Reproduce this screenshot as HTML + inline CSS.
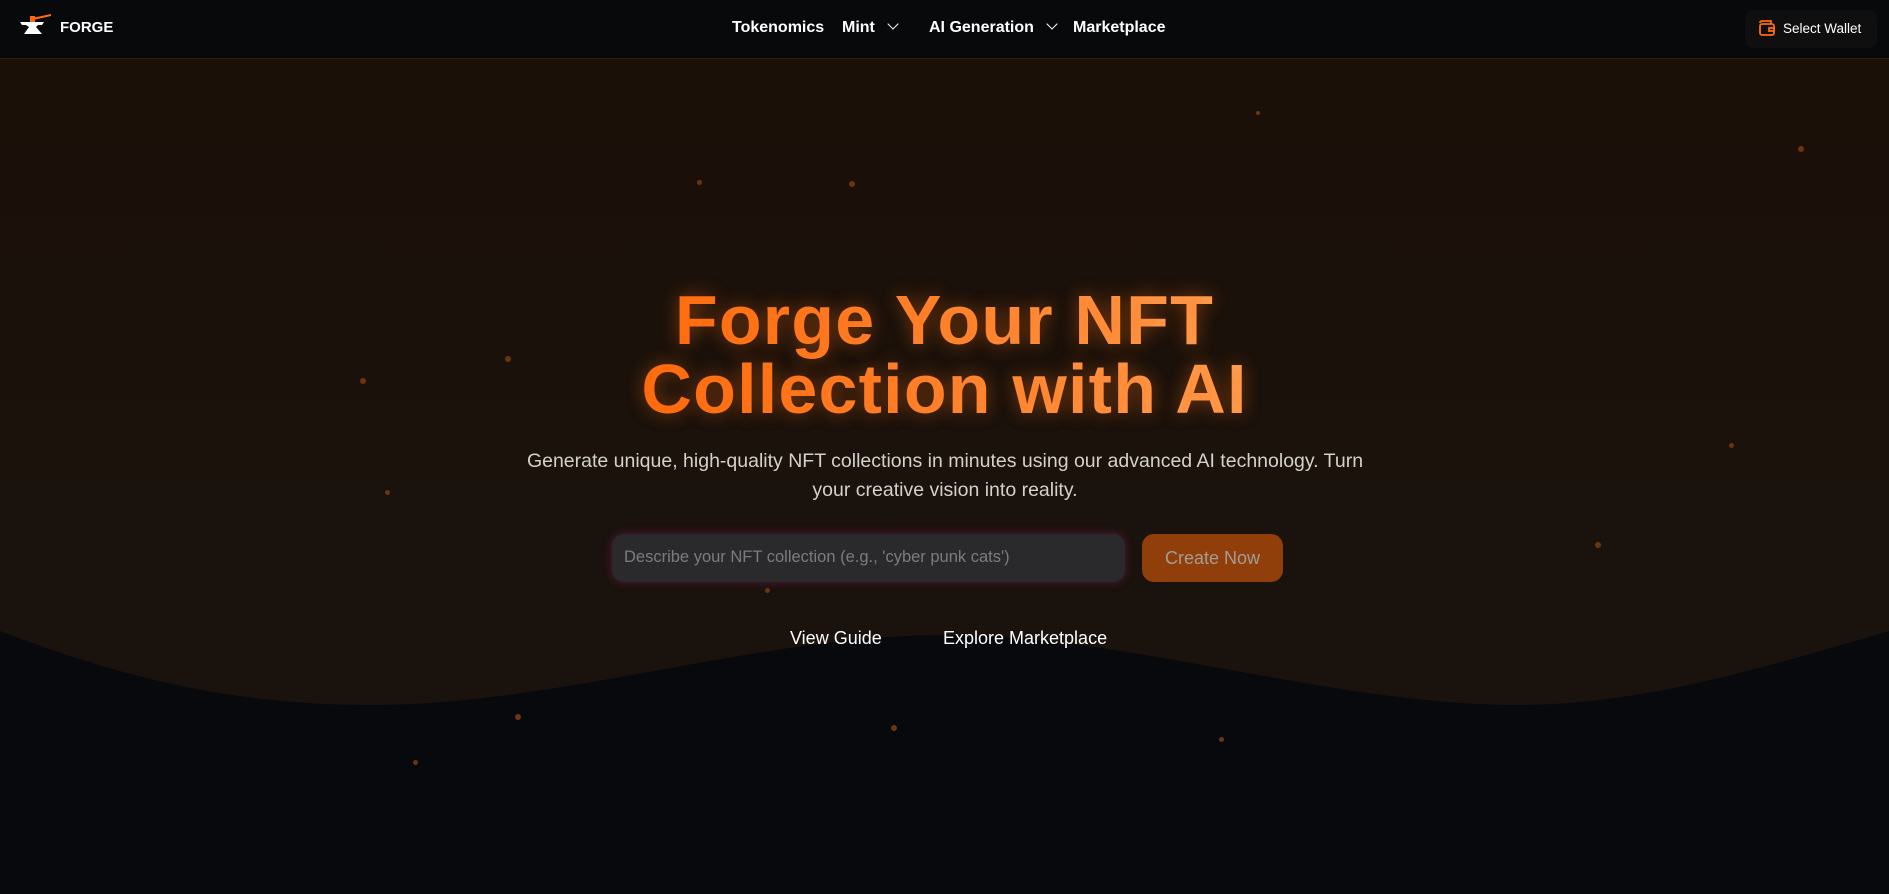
<!DOCTYPE html>
<html><head><meta charset="utf-8"><style>
*{margin:0;padding:0;box-sizing:border-box}
body{width:1889px;height:894px;overflow:hidden;background:#08090c;font-family:"Liberation Sans",sans-serif;position:relative}
.hero{position:absolute;left:0;top:59px;width:1889px;height:835px;background:linear-gradient(180deg,#1b1008 0%,#1a120c 60%,#1a120d 100%)}
svg.wave{position:absolute;left:0;top:0}
nav{position:absolute;left:0;top:0;width:1889px;height:59px;background:#08090b;border-bottom:1px solid #2a2018}
.logo{position:absolute;left:60px;top:19px;color:#fff;font-weight:bold;font-size:15px}
.nav a{position:absolute;top:19px;color:#fff;font-weight:bold;font-size:16px;text-decoration:none;white-space:nowrap}
.chev{display:inline-block;width:8px;height:8px;border-right:1.6px solid #fff;border-bottom:1.6px solid #fff;transform:rotate(45deg);margin-left:14px;position:relative;top:-4px}
.wallet{position:absolute;left:1745px;top:10px;width:132px;height:38px;background:#0f0f10;border-radius:8px;color:#fff;font-size:13.5px}
.wallet span{position:absolute;left:38px;top:11px}
h1{position:absolute;left:0;width:1889px;top:286px;text-align:center;font-size:70px;line-height:69px;font-weight:bold;color:#ff7a1a;text-shadow:0 0 18px rgba(255,110,20,.45);letter-spacing:1.2px}
h1 span{display:inline-block;background:linear-gradient(90deg,#ff6a0c,#ffa255);-webkit-background-clip:text;color:transparent}
.sub{position:absolute;left:510px;width:870px;top:447px;text-align:center;color:#d4d0cc;font-size:19.5px;line-height:29px}
.inp{position:absolute;left:612px;top:534px;width:513px;height:48px;background:#2a2a2c;border-radius:12px;box-shadow:0 0 10px rgba(150,40,110,.45);color:#7c7c7e;font-size:16.5px;padding:14px 12px}
.btn{position:absolute;left:1142px;top:534px;width:141px;height:48px;background:#913f0a;border-radius:12px;color:#a59c96;font-size:18px;text-align:center;line-height:48px}
.lnk{position:absolute;top:628px;color:#fff;font-size:18px}
.d{position:absolute;border-radius:50%;background:#6b3510}
</style></head><body>
<div class="hero">
<svg class="wave" width="1889" height="835"><path d="M0 572 C150 630 260 646 373 646 C560 646 760 576 945 576 C1130 576 1330 646 1518 646 C1640 646 1760 610 1889 572 L1889 835 L0 835Z" fill="#08090c"/></svg>
</div>
<div class="d" style="left:697px;top:180px;width:5px;height:5px"></div>
<div class="d" style="left:849px;top:181px;width:6px;height:6px"></div>
<div class="d" style="left:505px;top:356px;width:6px;height:6px"></div>
<div class="d" style="left:360px;top:378px;width:6px;height:6px"></div>
<div class="d" style="left:385px;top:490px;width:5px;height:5px"></div>
<div class="d" style="left:765px;top:588px;width:5px;height:5px"></div>
<div class="d" style="left:1595px;top:542px;width:6px;height:6px"></div>
<div class="d" style="left:1798px;top:146px;width:6px;height:6px"></div>
<div class="d" style="left:1256px;top:111px;width:4px;height:4px"></div>
<div class="d" style="left:515px;top:714px;width:6px;height:6px"></div>
<div class="d" style="left:891px;top:725px;width:6px;height:6px"></div>
<div class="d" style="left:1219px;top:737px;width:5px;height:5px"></div>
<div class="d" style="left:413px;top:760px;width:5px;height:5px"></div>
<div class="d" style="left:1729px;top:443px;width:5px;height:5px"></div>
<nav>
<svg style="position:absolute;left:20px;top:14px" width="32" height="22" viewBox="0 0 32 22"><path d="M12 4 L31 0 L31 2 L13 6Z" fill="#ff6a10"/><rect x="10" y="2" width="5" height="7" fill="#ff6a10"/><path d="M0 8 H24 L22 11 H18 L16 13 L22 20 H4 L9 13 L6 11 H2Z" fill="#fff"/></svg>
<div class="logo">FORGE</div>
<div class="nav">
<a style="left:732px">Tokenomics</a>
<a style="left:842px">Mint<i class="chev"></i></a>
<a style="left:929px">AI Generation<i class="chev"></i></a>
<a style="left:1073px">Marketplace</a>
</div>
<div class="wallet"><svg style="position:absolute;left:13px;top:9px" width="18" height="18" viewBox="0 0 18 18" fill="none" stroke="#ff6a10" stroke-width="1.8"><path d="M2 4 Q2 2 4 2 H13 V5"/><rect x="2" y="5" width="14" height="11" rx="2"/><rect x="11" y="9" width="5" height="3"/></svg><span>Select Wallet</span></div>
</nav>
<h1><span>Forge Your NFT<br>Collection with AI</span></h1>
<div class="sub">Generate unique, high-quality NFT collections in minutes using our advanced AI technology. Turn your creative vision into reality.</div>
<div class="inp">Describe your NFT collection (e.g., 'cyber punk cats')</div>
<div class="btn">Create Now</div>
<div class="lnk" style="left:790px">View Guide</div>
<div class="lnk" style="left:943px">Explore Marketplace</div>
</body></html>
